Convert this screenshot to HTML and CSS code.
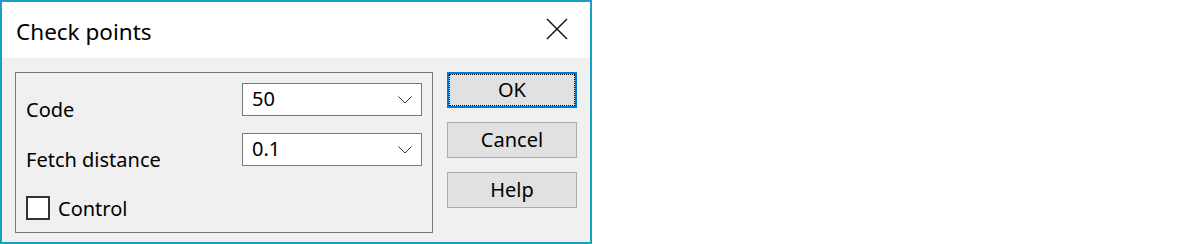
FILE: index.html
```html
<!DOCTYPE html>
<html lang="en">

<head>
    <meta charset="UTF-8">
    <title>Check points</title>
    <link rel="stylesheet" href="styles.css">
</head>

<body>

    <div class="dialog">
        <div class="titlebar">
            <span class="title">Check points</span>
            <svg class="close" width="22" height="22" viewBox="0 0 22 22">
                <line x1="1" y1="1" x2="21" y2="21" />
                <line x1="21" y1="1" x2="1" y2="21" />
            </svg>
        </div>

        <div class="content">
            <div class="group">
                <div class="row">
                    <span class="label">Code</span>
                    <div class="combo">
                        <span>50</span>
                        <svg class="chevron" width="14" height="8" viewBox="0 0 14 8">
                            <polyline points="0.5,0.5 7,7 13.5,0.5" />
                        </svg>
                    </div>
                </div>
                <div class="row">
                    <span class="label">Fetch distance</span>
                    <div class="combo">
                        <span>0.1</span>
                        <svg class="chevron" width="14" height="8" viewBox="0 0 14 8">
                            <polyline points="0.5,0.5 7,7 13.5,0.5" />
                        </svg>
                    </div>
                </div>
                <label class="check">
                    <span class="box"></span>
                    <span>Control</span>
                </label>
            </div>

            <div class="buttons">
                <button class="default">OK</button>
                <button>Cancel</button>
                <button>Help</button>
            </div>
        </div>
    </div>

</body>

</html>
```

FILE: styles.css
```css
body {
    margin: 0;
    background: #fff;
    font-family: "Noto Sans", "Open Sans", sans-serif;
    font-size: 20px;
    color: #000;
}

.dialog {
    width: 592px;
    height: 244px;
    box-sizing: border-box;
    border: 2px solid #1a9fc4;
    background: #f0f0f0;
}

.titlebar {
    height: 56px;
    background: #fff;
    display: flex;
    align-items: center;
    justify-content: space-between;
    padding: 0 22px 0 14px;
}

.title {
    font-size: 22.5px;
    margin-top: 2px;
}

.close {
    margin-top: -3px;
}

.close line {
    stroke: #111;
    stroke-width: 1.4;
}

.content {
    display: flex;
    gap: 14px;
    padding: 14px 13px 0 13px;
}

.group {
    width: 418px;
    height: 161px;
    box-sizing: border-box;
    border: 1px solid #767676;
    padding: 10px 10px 0 10px;
    display: flex;
    flex-direction: column;
    gap: 17px;
}

.row {
    display: flex;
    justify-content: space-between;
    height: 33px;
}

.label {
    align-self: flex-end;
    line-height: 20px;
    margin-bottom: -4px;
}

.combo {
    width: 180px;
    height: 33px;
    box-sizing: border-box;
    border: 1px solid #7a7a7a;
    background: #fff;
    display: flex;
    align-items: center;
    justify-content: space-between;
    padding: 0 9px 2px 9px;
}

.chevron {
    margin-top: 2px;
}

.chevron polyline {
    fill: none;
    stroke: #333;
    stroke-width: 1;
}

.check {
    display: flex;
    align-items: center;
    gap: 8px;
    height: 24px;
    margin-top: 13px;
}

.box {
    width: 24px;
    height: 24px;
    box-sizing: border-box;
    border: 2px solid #333;
    background: #fff;
}

.buttons {
    display: flex;
    flex-direction: column;
    gap: 14px;
}

button {
    width: 130px;
    height: 36px;
    border: 1px solid #adadad;
    background: #e1e1e1;
    font-family: inherit;
    font-size: 20px;
    color: #000;
    padding: 0 0 2px 0;
}

button.default {
    border: 2px solid #0078d7;
    outline: 1px dotted #000;
    outline-offset: -3px;
}
```
